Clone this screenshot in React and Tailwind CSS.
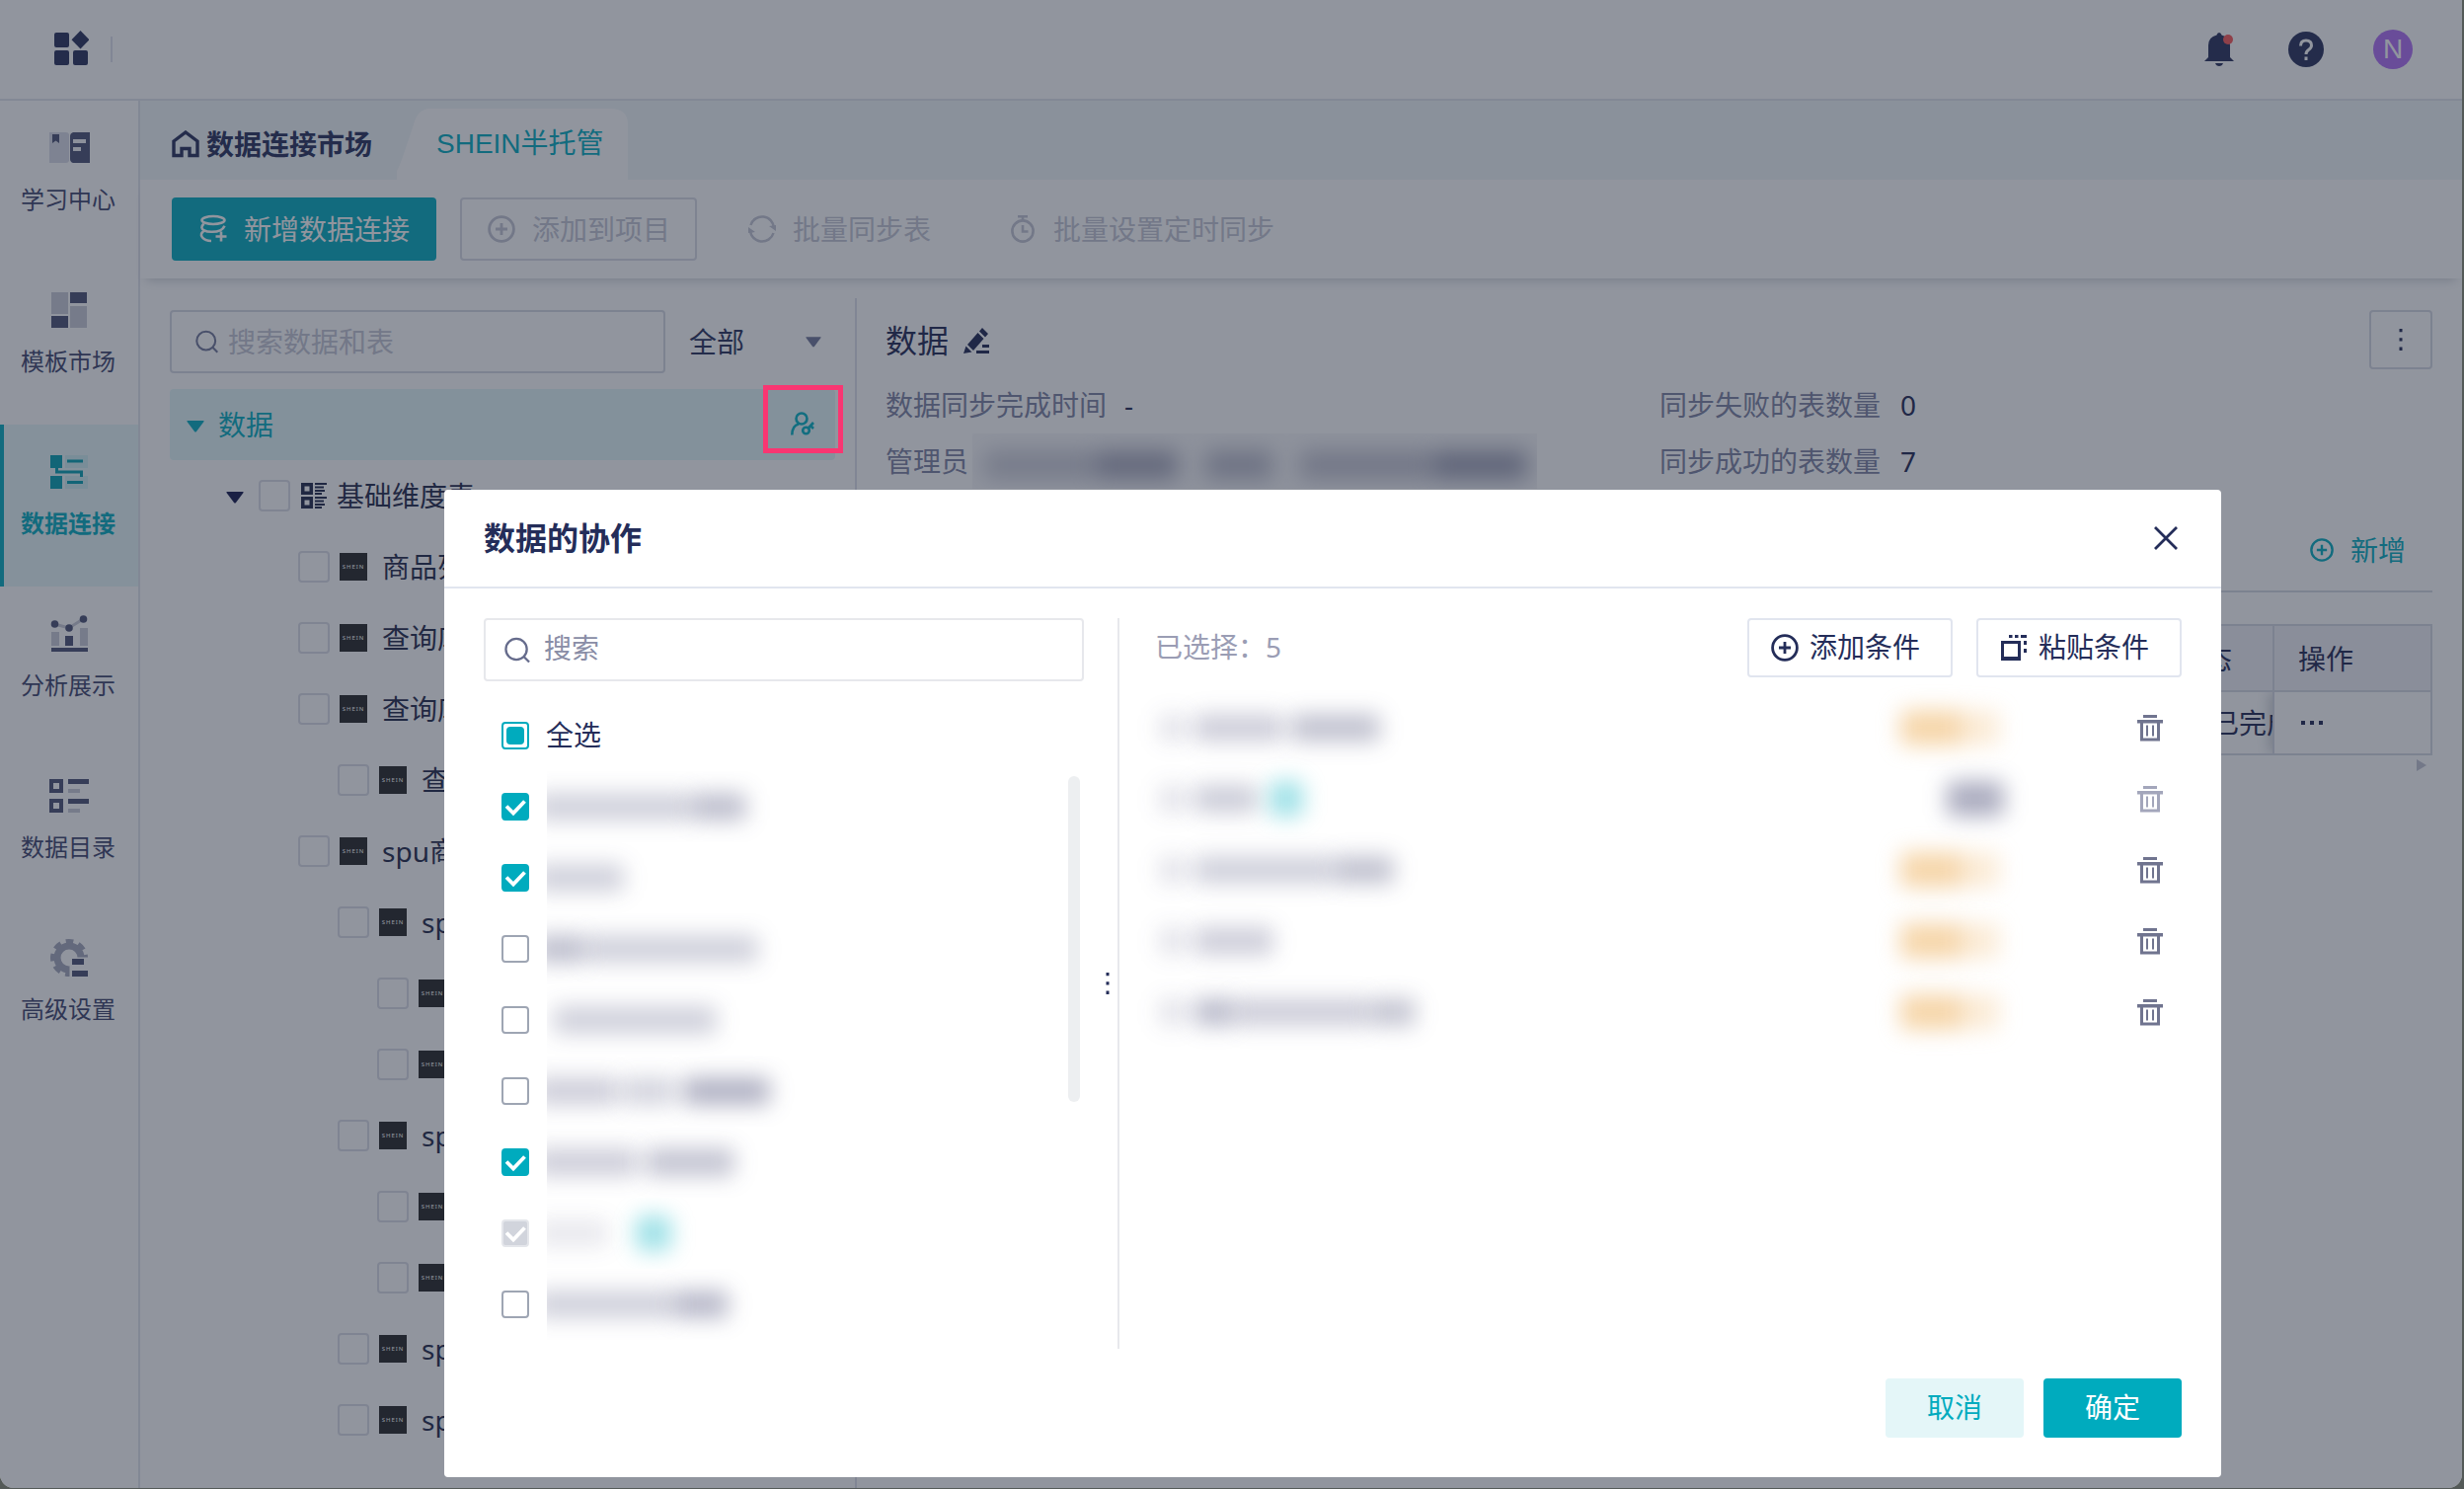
import { useState } from "react";

const SIDE_ITEMS = [
    { label: "学习中心", icon: LearnIcon },
    { label: "模板市场", icon: TemplateIcon },
    { label: "数据连接", icon: ConnectIcon, active: true },
    { label: "分析展示", icon: AnalysisIcon },
    { label: "数据目录", icon: CatalogIcon },
    { label: "高级设置", icon: SettingIcon },
];

// level controls the indent of a table in the tree
const TABLES = [
    { level: 1, name: "商品列表" },
    { level: 1, name: "查询库存" },
    { level: 1, name: "查询库存" },
    { level: 2, name: "查询" },
    { level: 1, name: "spu商品" },
    { level: 2, name: "spu" },
    { level: 3, name: "spu" },
    { level: 3, name: "spu" },
    { level: 2, name: "spu" },
    { level: 3, name: "spu" },
    { level: 3, name: "spu" },
    { level: 2, name: "spu" },
    { level: 2, name: "spu" },
];

const INDENT = { 1: "pl-[130px]", 2: "pl-[170px]", 3: "pl-[210px]" };

// Names are masked, every entry is a list of blurred bars
const MEMBERS = [
    { state: "on", bars: ["-ml-3 w-[158px] bg-[#25285a]/22", "w-[56px] bg-[#25285a]/30"] },
    { state: "on", bars: ["-ml-3 w-[90px] bg-[#25285a]/22"] },
    { state: "off", bars: ["-ml-3 w-[50px] bg-[#25285a]/30", "w-[176px] bg-[#25285a]/22"] },
    { state: "off", bars: ["ml-[6px] w-[166px] bg-[#25285a]/22"] },
    { state: "off", bars: ["-ml-3 w-[84px] bg-[#25285a]/23", "ml-1 w-[54px] bg-[#25285a]/20", "ml-2 w-[88px] bg-[#25285a]/36"] },
    { state: "on", bars: ["-ml-3 w-[104px] bg-[#25285a]/23", "ml-2 w-[90px] bg-[#25285a]/28"] },
    { state: "disabled", bars: ["-ml-3 w-[74px] bg-[#25285a]/10", "ml-[28px] !h-9 w-[36px] bg-[#00b0c0]/38"] },
    { state: "off", bars: ["-ml-3 w-[140px] bg-[#25285a]/22", "w-[56px] bg-[#25285a]/33"] },
];

const SELECTED = [
    { bars: ["w-[90px] bg-[#25285a]/23", "ml-2 w-[90px] bg-[#25285a]/29"] },
    { bars: ["w-[64px] bg-[#25285a]/24", "ml-3 !h-9 w-[34px] bg-[#00b0c0]/38"], owner: true },
    { bars: ["w-[142px] bg-[#25285a]/22", "w-[60px] bg-[#25285a]/29"] },
    { bars: ["w-[80px] bg-[#25285a]/23"] },
    { bars: ["w-[40px] bg-[#25285a]/31", "w-[138px] bg-[#25285a]/23", "w-[46px] bg-[#25285a]/27"] },
];

function LearnIcon() {
    return (
        <svg className="size-12" viewBox="0 0 48 48">
            <path d="M4 8h17q2 0 3 2v27q-1 2-3 2H4z" fill="#d9dbe6" />
            <path d="M7 10h7v9l-3.500-2.500L7 19z" fill="#484f73" />
            <path d="M45 8H28q-3 1-3 4v23q0 3 3 4h17z" fill="#484f73" />
            <path d="M28 15h13v4H28zM28 23h8v4h-8z" fill="#f4f4f8" />
        </svg>
    );
}

function TemplateIcon() {
    return (
        <svg className="size-12" viewBox="0 0 48 48">
            <path d="M6 6h17v22H6zM25 20h17v22H25z" fill="#c8cad6" />
            <path d="M25 6h17v11H25zM6 30h17v12H6z" fill="#484f73" />
        </svg>
    );
}

function ConnectIcon() {
    return (
        <svg className="size-12" viewBox="0 0 48 48">
            <path d="M20 7h23v13H20zM20 28h23v13H20z" fill="#cfeff2" />
            <path d="M5 7h12v13H5zM5 28h12v13H5zM22 11.500h16v3H22zM22 33h16v3H22z" fill="#009fb0" />
            <path d="M11.500 19v5H36.500v5" fill="none" stroke="#009fb0" strokeWidth="3" />
        </svg>
    );
}

function AnalysisIcon() {
    return (
        <svg className="size-12" viewBox="0 0 48 48">
            <path d="M9 14l15 4 14-9" fill="none" stroke="#c8cad6" strokeWidth="3" />
            <path d="M6 22h8v14H6zM35 18h8v18h-8z" fill="#c8cad6" />
            <path d="M20 26h8v10h-8zM6 38h37v4H6z" fill="#484f73" />
            <circle cx="9.500" cy="14" r="3.800" fill="#484f73" />
            <circle cx="24" cy="18" r="3.800" fill="#484f73" />
            <circle cx="38.500" cy="9" r="3.800" fill="#484f73" />
        </svg>
    );
}

function CatalogIcon() {
    return (
        <svg className="size-12" viewBox="0 0 48 48">
            <path d="M6 9h10v10H6zM6 29h10v10H6z" fill="none" stroke="#484f73" strokeWidth="4" />
            <path d="M23 7h21v5H23zM23 27h21v5H23z" fill="#484f73" />
            <path d="M23 17h12v4H23zM23 37h12v4H23z" fill="#c8cad6" />
        </svg>
    );
}

function SettingIcon() {
    return (
        <svg className="size-12" viewBox="0 0 48 48">
            <circle cx="24" cy="24" r="12" fill="none" stroke="#a3a6ba" strokeWidth="7" />
            <circle cx="24" cy="24" r="16.500" fill="none" stroke="#a3a6ba" strokeWidth="5" strokeDasharray="7.500 5.459" strokeDashoffset="3.750" />
            <path d="M24.500 23.500H48V48H24.500z" fill="#fff" />
            <path d="M27 25h12v6H27zM27 37h16v6H27z" fill="#484f73" />
        </svg>
    );
}

function SearchIcon({ className }) {
    return (
        <svg className={className} viewBox="0 0 28 28" fill="none" stroke="currentColor" strokeWidth="2.400">
            <circle cx="12.500" cy="13" r="11" />
            <path d="M20 20.500l6 6" />
        </svg>
    );
}

function PlusCircleIcon({ className }) {
    return (
        <svg className={className} viewBox="0 0 28 28" fill="none" stroke="currentColor" strokeWidth="2.800">
            <circle cx="14" cy="14" r="12.400" />
            <path d="M14 8v12M8 14h12" />
        </svg>
    );
}

function TrashIcon({ className }) {
    return (
        <svg className={className} viewBox="0 0 26 28" fill="currentColor">
            <path d="M6 1h14v3H6zM0 6h26v3.500H0z" />
            <path d="M4.500 9v17h17V9" fill="none" stroke="currentColor" strokeWidth="3" />
            <path d="M9 11.500h2v11H9zM15 11.500h2v11h-2z" />
        </svg>
    );
}

function KebabIcon() {
    return (
        <svg className="h-[22px] w-1" viewBox="0 0 4 22" fill="currentColor">
            <path d="M.5 0h3v3.300h-3zM.5 9.300h3v3.300h-3zM.5 18.600h3V22h-3z" />
        </svg>
    );
}

function Caret({ className }) {
    return (
        <svg className={className} viewBox="0 0 18 12" fill="currentColor">
            <path d="M1 0h16q1 0 .5 1L10 11q-1 1-2 0L.5 1Q0 0 1 0z" />
        </svg>
    );
}

function Mask({ bars }) {
    return (
        <>
            {bars.map((bar, i) => (
                <span key={i} className={`h-[28px] shrink-0 rounded-md blur-[11px] ${bar}`} />
            ))}
        </>
    );
}

function Checkbox({ state, onClick }) {
    if (state === "partial") {
        return (
            <span className="flex size-7 shrink-0 items-center justify-center rounded border-2 border-[#00abbe]">
                <span className="size-[18px] rounded-[4px] bg-[#00abbe]" />
            </span>
        );
    }
    if (state === "off") {
        return <button onClick={onClick} className="size-7 shrink-0 rounded border-2 border-[#9ea5b3]" />;
    }
    return (
        <button
            onClick={onClick}
            className={
                state === "disabled"
                    ? "size-7 shrink-0 rounded border-2 border-[#e4e6eb] bg-[#d1d4dc]"
                    : "size-7 shrink-0 rounded border-2 border-[#00abbe] bg-[#00abbe]"
            }
        >
            <svg className="size-6" viewBox="0 0 24 24" fill="none" stroke="#fff" strokeWidth="3.800">
                <path d="M3 11.500l7 7L21.500 6.500" />
            </svg>
        </button>
    );
}

function Header() {
    return (
        <header className="flex h-[102px] shrink-0 items-center border-b-2 border-[#e1e4ec] pl-[54px] pr-[50px] text-[#242d59]">
            <svg className="mb-[2px] size-9" viewBox="0 0 36 36" fill="currentColor">
                <rect x="1" y="2" width="15" height="15" rx="2" />
                <path d="M27.500 0l9 9.200-9 9.200-9-9.200z" />
                <rect x="1" y="20" width="15" height="15" rx="2" />
                <rect x="20" y="20" width="15" height="15" rx="2" />
            </svg>
            <span className="ml-[22px] h-[26px] w-[2px] bg-[#dfe1ec]" />
            <div className="ml-auto flex items-center">
                <svg className="h-9 w-[30px]" viewBox="0 0 30 36" fill="currentColor">
                    <path d="M15 1q2 0 2.500 2.500Q26 5.500 26 14v12l4 4H0l4-4V14Q4 5.500 12.500 3.500 13 1 15 1zM11 32h8q-1 3-4 3t-4-3z" />
                    <circle cx="24" cy="8" r="5" fill="#fb5555" />
                </svg>
                <span className="ml-[55px] flex size-9 items-center justify-center rounded-full bg-[#242d59]">
                    <svg className="size-7" viewBox="0 0 28 28" fill="none" stroke="#fff" strokeWidth="3">
                        <path d="M8.500 10.500Q8.500 5 14 5t5.500 5q0 2.500-3 4.500-2.500 1.700-2.500 4.500" />
                        <path d="M14 21.500v3.500" />
                    </svg>
                </span>
                <span className="ml-[50px] flex size-10 items-center justify-center rounded-full bg-[#ae6df5] font-['Liberation_Sans',sans-serif] text-[28px] text-white">
                    N
                </span>
            </div>
        </header>
    );
}

function Sidebar() {
    return (
        <nav className="w-[142px] shrink-0 border-r-2 border-[#e1e4ec]">
            {SIDE_ITEMS.map(({ label, icon: Icon, active }) => (
                <div
                    key={label}
                    className={
                        active
                            ? "flex h-[164px] flex-col items-center border-l-4 border-[#00abbe] bg-[#e6f7f9] pt-6 pr-1 font-bold text-[#00abbe]"
                            : "flex h-[164px] flex-col items-center pt-6 text-[#3a416a]"
                    }
                >
                    <Icon />
                    <span className="mt-[10px] mr-[2px] text-2xl leading-9">{label}</span>
                </div>
            ))}
        </nav>
    );
}

function TabBar() {
    return (
        <div className="flex h-20 items-end bg-[#f0f6f8] pl-8">
            <div className="flex h-[72px] w-[228px] items-center text-[28px] font-bold text-[#242d59]">
                <svg className="mr-[7px] h-7 w-7" viewBox="0 0 28 28" fill="none" stroke="currentColor" strokeWidth="3.400">
                    <path d="M2 11L14 2l12 9v14.500h-8v-7h-8v7H2z" />
                </svg>
                数据连接市场
            </div>
            <div className="relative h-[72px] w-[234px]">
                <svg className="absolute inset-0" width="234" height="72" viewBox="0 0 234 72">
                    <path d="M0 72V63q3-5 8-20l9-27Q21 0 34 0h182q18 0 18 16v56z" fill="#fff" />
                </svg>
                <span className="relative block pl-10 font-['Liberation_Sans','Noto_Sans_CJK_SC',sans-serif] text-[28px] leading-[72px] text-[#00abbe]">
                    SHEIN半托管
                </span>
            </div>
        </div>
    );
}

function Toolbar() {
    return (
        <div className="relative flex h-[100px] items-center pl-8 text-[28px] text-[#c2c4d2] shadow-[0_8px_10px_-6px_rgba(60,70,90,0.25)]">
            <button className="flex h-16 w-[268px] items-center rounded bg-[#00abbe] pl-[28px] text-white">
                <svg className="h-9 w-7" viewBox="0 0 28 36" fill="none" stroke="currentColor" strokeWidth="2.600">
                    <ellipse cx="14" cy="9" rx="11.500" ry="4" />
                    <path d="M4.500 12.500Q0 17 5 19.500q3 1.500 8 1.300M5 19.500Q0 23 3 26.500t9 3.500M13 20.800q10 0 12.500-6M22 20.500v10M16.500 25.500h11" />
                </svg>
                <span className="ml-[17px]">新增数据连接</span>
            </button>
            <button className="ml-6 flex h-16 w-[240px] items-center rounded border-2 border-[#d8dae5] pl-[26px]">
                <PlusCircleIcon className="size-7" />
                <span className="ml-[17px]">添加到项目</span>
            </button>
            <svg className="ml-[52px] size-7" viewBox="0 0 28 28" fill="none" stroke="currentColor" strokeWidth="2.500">
                <path d="M2.500 10A12 12 0 0 1 26 13M25.500 18A12 12 0 0 1 2 15" />
                <path d="M28 16l-7-5 7-1zM0 12l7 5-7 1z" fill="currentColor" stroke="none" />
            </svg>
            <span className="ml-[17px]">批量同步表</span>
            <svg className="ml-[81px] h-7 w-6" viewBox="0 0 24 28" fill="none" stroke="currentColor" strokeWidth="2.600">
                <circle cx="12" cy="16" r="10.600" />
                <path d="M7 1.300h10M12 1v5M12 10v6.500h5.500" />
            </svg>
            <span className="ml-[19px]">批量设置定时同步</span>
        </div>
    );
}

function TablePanel() {
    return (
        <div className="w-[724px] shrink-0 pl-[30px] pr-[20px] pt-8">
            <div className="flex h-16">
                <div className="flex w-[502px] items-center rounded border-2 border-[#d5d8e3] pl-6 text-[28px] text-[#c2c4d2]">
                    <SearchIcon className="size-6 text-[#6f7598]" />
                    <span className="ml-[9px]">搜索数据和表</span>
                </div>
                <div className="flex flex-1 items-center justify-between pl-6 pr-[14px] text-[28px] text-[#242d59]">
                    全部
                    <Caret className="h-[11px] w-4 text-[#6f7598]" />
                </div>
            </div>
            <div className="mt-4 flex h-[72px] items-center rounded bg-[#e2f7f9] pl-[17px] text-[28px] text-[#00abbe]">
                <Caret className="mt-1 h-3 w-[18px]" />
                <span className="ml-[14px]">数据</span>
            </div>
            <div className="flex h-[72px] items-center pl-[57px] text-[28px] text-[#1d2546]">
                <Caret className="mt-1 h-3 w-[18px] text-[#10154a]" />
                <span className="ml-[15px] size-8 rounded border-2 border-[#dadce6]" />
                <svg className="ml-[11px] size-[26px]" viewBox="0 0 26 26" fill="currentColor">
                    <path d="M0 0h12v12H0zM3.500 3.500v5h5v-5zM0 14h12v12H0zM3.500 17.500v5h5v-5z" fillRule="evenodd" />
                    <path d="M14 0h12v2H14zM14 3.500h9v2h-9zM14 7h10v2H14zM14 10h7v2h-7zM14 14h12v2H14zM14 17.500h9v2h-9zM14 21h10v2H14zM14 24h7v2h-7z" />
                </svg>
                <span className="ml-[10px]">基础维度表</span>
            </div>
            {TABLES.map((table, i) => (
                <div key={i} className={`flex h-[72px] items-center whitespace-nowrap text-[28px] text-[#1d2546] ${INDENT[table.level]}`}>
                    <span className="size-8 shrink-0 rounded border-2 border-[#dadce6]" />
                    <span className="ml-[10px] flex size-7 shrink-0 items-center justify-center bg-[#222222] text-[6px] tracking-[1px] text-white">
                        SHEIN
                    </span>
                    <span className="ml-[15px]">{table.name}</span>
                </div>
            ))}
        </div>
    );
}

function DetailPanel() {
    return (
        <div className="mt-5 flex-1 border-l-2 border-[#dfe1ea] pl-[29px] pr-[30px] pt-3 text-[28px] text-[#1d2550]">
            <div className="flex h-16 items-center">
                <span className="mb-[2px] text-[32px]">数据</span>
                <svg className="mb-[2px] ml-[15px] h-[26px] w-[26px]" viewBox="0 0 26 26" fill="currentColor">
                    <path d="M19 0l6 6-3 3.500-6-6zM14.500 5l6 6-10.500 12L4 17zM2.500 18.500l6 6L0 26zM19 17h7v3h-7zM13 23h13v3H13z" />
                </svg>
                <button className="mb-1 ml-auto flex h-[60px] w-16 items-center justify-center rounded border-2 border-[#d5d8e3]">
                    <KebabIcon />
                </button>
            </div>
            <div className="mt-[3px] flex h-[57px] items-center">
                <div className="w-[784px]">
                    <span className="text-[#7a80a0]">数据同步完成时间</span>
                    <span className="ml-[18px]">-</span>
                </div>
                <span className="text-[#7a80a0]">同步失败的表数量</span>
                <span className="ml-5">0</span>
            </div>
            <div className="flex h-[57px] items-center">
                <div className="flex w-[784px] items-center">
                    <span className="text-[#7a80a0]">管理员</span>
                    <div className="ml-1 flex h-14 w-[572px] items-center overflow-hidden bg-[#25285a]/3 pl-3">
                        <Mask
                            bars={[
                                "mt-2 w-[112px] bg-[#25285a]/22",
                                "mt-2 w-[84px] bg-[#25285a]/40",
                                "ml-7 mt-2 w-[68px] bg-[#25285a]/30",
                                "ml-7 mt-2 w-[134px] bg-[#25285a]/26",
                                "mt-2 w-[96px] bg-[#25285a]/44",
                            ]}
                        />
                    </div>
                </div>
                <span className="text-[#7a80a0]">同步成功的表数量</span>
                <span className="ml-5">7</span>
            </div>
            <div className="mt-[21px] flex h-[84px] items-center justify-end border-b-2 border-[#d5d8e3] pr-[27px] text-[#00abbe]">
                <PlusCircleIcon className="size-6" />
                <span className="ml-[17px]">新增</span>
            </div>
            <div className="mt-8 border-2 border-[#d5d8e3]">
                <div className="flex h-[67px] items-center border-b-2 border-[#d5d8e3] bg-[#f0f1f7]">
                    <div className="flex flex-1 justify-end pr-[41px]">状态</div>
                    <div className="flex h-full w-[160px] items-center border-l-2 border-[#d5d8e3] pl-6">操作</div>
                </div>
                <div className="flex h-[62px] items-center overflow-hidden">
                    <div className="flex flex-1 justify-end overflow-hidden">
                        <span className="w-[62px] whitespace-nowrap">已完成</span>
                    </div>
                    <div className="relative flex h-full w-[160px] items-center gap-[5px] border-l-2 border-[#d5d8e3] bg-white pl-[27px] shadow-[-4px_0_12px_rgba(60,70,90,0.25)]">
                        <span className="size-1 bg-[#1d2550]" />
                        <span className="size-1 bg-[#1d2550]" />
                        <span className="size-1 bg-[#1d2550]" />
                    </div>
                </div>
            </div>
            <div className="mt-1 flex justify-end pr-[6px]">
                <svg className="h-3 w-[10px]" viewBox="0 0 10 12" fill="#c2c4d2">
                    <path d="M0 0l10 6-10 6z" />
                </svg>
            </div>
        </div>
    );
}

function CollaborateModal() {
    const [members, setMembers] = useState(MEMBERS);

    const toggle = (index) => {
        setMembers(
            members.map((m, i) => {
                if (i !== index || m.state === "disabled") return m;
                return { ...m, state: m.state === "on" ? "off" : "on" };
            })
        );
    };

    return (
        <div className="flex h-[1000px] w-[1800px] flex-col rounded bg-white text-[28px] text-[#242d59]">
            <div className="flex h-[100px] shrink-0 items-center justify-between border-b-2 border-[#e1e5ef] pl-10 pr-11">
                <h2 className="text-[32px] font-bold">数据的协作</h2>
                <svg className="size-6" viewBox="0 0 24 24" fill="none" stroke="currentColor" strokeWidth="2.800">
                    <path d="M1 1l22 22M23 1L1 23" />
                </svg>
            </div>

            <div className="flex h-[770px] px-10 pt-[30px]">
                <div className="w-[608px]">
                    <div className="flex h-16 items-center rounded border-2 border-[#e7e8ec] pl-[19px] text-[#898da6]">
                        <SearchIcon className="size-[27px] text-[#666c8c]" />
                        <span className="-mt-[5px] ml-[13px]">搜索</span>
                    </div>
                    <div className="mt-[19px] flex h-[72px] items-center pl-[18px]">
                        <Checkbox state="partial" />
                        <span className="-mt-[2px] ml-[17px]">全选</span>
                    </div>
                    <div className="flex">
                        <div className="flex-1">
                            {members.map((m, i) => (
                                <div key={i} className="flex h-[72px] items-center pl-[18px]">
                                    <Checkbox state={m.state} onClick={() => toggle(i)} />
                                    <div className="ml-[18px] flex h-full flex-1 items-center overflow-hidden">
                                        <Mask bars={m.bars} />
                                    </div>
                                </div>
                            ))}
                        </div>
                        <div className="mr-1 mt-[5px] h-[330px] w-3 rounded-full bg-[#edeff1]" />
                    </div>
                </div>

                <div className="flex w-[36px] items-center justify-end border-r-2 border-[#e7e8ec] pr-2">
                    <KebabIcon />
                </div>

                <div className="flex-1 pl-9">
                    <div className="flex h-[60px] items-center">
                        <span className="-mt-[2px] text-[#9a9db4]">已选择：5</span>
                        <button className="ml-auto flex h-[60px] w-[208px] items-center rounded border-2 border-[#e1e5ef] pl-[22px]">
                            <PlusCircleIcon className="size-7" />
                            <span className="-mt-[2px] ml-[11px]">添加条件</span>
                        </button>
                        <button className="ml-6 flex h-[60px] w-[208px] items-center rounded border-2 border-[#e1e5ef] pl-[23px]">
                            <svg className="size-[26px]" viewBox="0 0 26 26" fill="currentColor">
                                <path d="M0 6h20v20H0zM3 9v13h14V9z" fillRule="evenodd" />
                                <path d="M8 0h3.500v3H8zM14 0h3.500v3H14zM20 0h6v3h-6zM23 6h3v4h-3zM23 14h3v4h-3z" />
                            </svg>
                            <span className="-mt-[2px] ml-3">粘贴条件</span>
                        </button>
                    </div>
                    <div className="mt-[15px]">
                        {SELECTED.map((item, i) => (
                            <div key={i} className="flex h-[72px] items-center pr-[19px]">
                                <span className="mr-2 ml-1 h-[28px] w-7 rounded-md bg-[#25285a]/13 blur-[11px]" />
                                <Mask bars={item.bars} />
                                {item.owner ? (
                                    <span className="ml-auto mr-[135px] h-9 w-[58px] rounded-md bg-[#25285a]/38 blur-[11px]" />
                                ) : (
                                    <span className="ml-auto mr-[140px] flex blur-[11px]">
                                        <span className="h-9 w-[62px] rounded-l-md bg-[#efb86c]/58" />
                                        <span className="h-9 w-[38px] rounded-r-md bg-[#efb86c]/28" />
                                    </span>
                                )}
                                <TrashIcon className={item.owner ? "h-7 w-[26px] text-[#a3a6bb]" : "h-7 w-[26px] text-[#70748f]"} />
                            </div>
                        ))}
                    </div>
                </div>
            </div>

            <div className="mt-[30px] flex justify-end gap-5 pr-10">
                <button className="h-[60px] w-[140px] rounded bg-[#e4f6f8] pb-[2px] text-[#00abbe]">取消</button>
                <button className="h-[60px] w-[140px] rounded bg-[#00abbe] pb-[2px] text-white">确定</button>
            </div>
        </div>
    );
}

export default function App() {
    return (
        <div className="h-[1508px] w-[2496px] overflow-hidden bg-[#545a58] font-['Noto_Sans','Noto_Sans_CJK_SC',sans-serif]">
            <div className="relative flex h-[1507px] w-[2494px] flex-col overflow-hidden rounded-b-[14px] bg-white">
                <Header />
                <div className="flex min-h-0 flex-1">
                    <Sidebar />
                    <div className="flex min-w-0 flex-1 flex-col">
                        <TabBar />
                        <Toolbar />
                        <div className="flex min-h-0 flex-1">
                            <TablePanel />
                            <DetailPanel />
                        </div>
                    </div>
                </div>

                {/* Dialog over the page */}
                <div className="absolute inset-0 bg-[#242b3d]/50 pl-[450px] pt-[496px]">
                    <CollaborateModal />
                </div>

                {/* Highlighted permission button of the tree row */}
                <div className="absolute left-[773px] top-[390px] flex h-[69px] w-[81px] items-center justify-center border-[5px] border-[#f93672] text-[#126e80]">
                    <svg className="mr-[2px] mt-2 size-6" viewBox="0 0 24 24" fill="none" stroke="currentColor" strokeWidth="2.600">
                        <circle cx="11" cy="7" r="5.500" />
                        <path d="M1.300 23.500Q1.500 14 8 12.500" />
                        <circle cx="15.500" cy="19" r="3.300" />
                        <path d="M17.500 17L23 11M20 14l3 3" />
                    </svg>
                </div>
            </div>
        </div>
    );
}
